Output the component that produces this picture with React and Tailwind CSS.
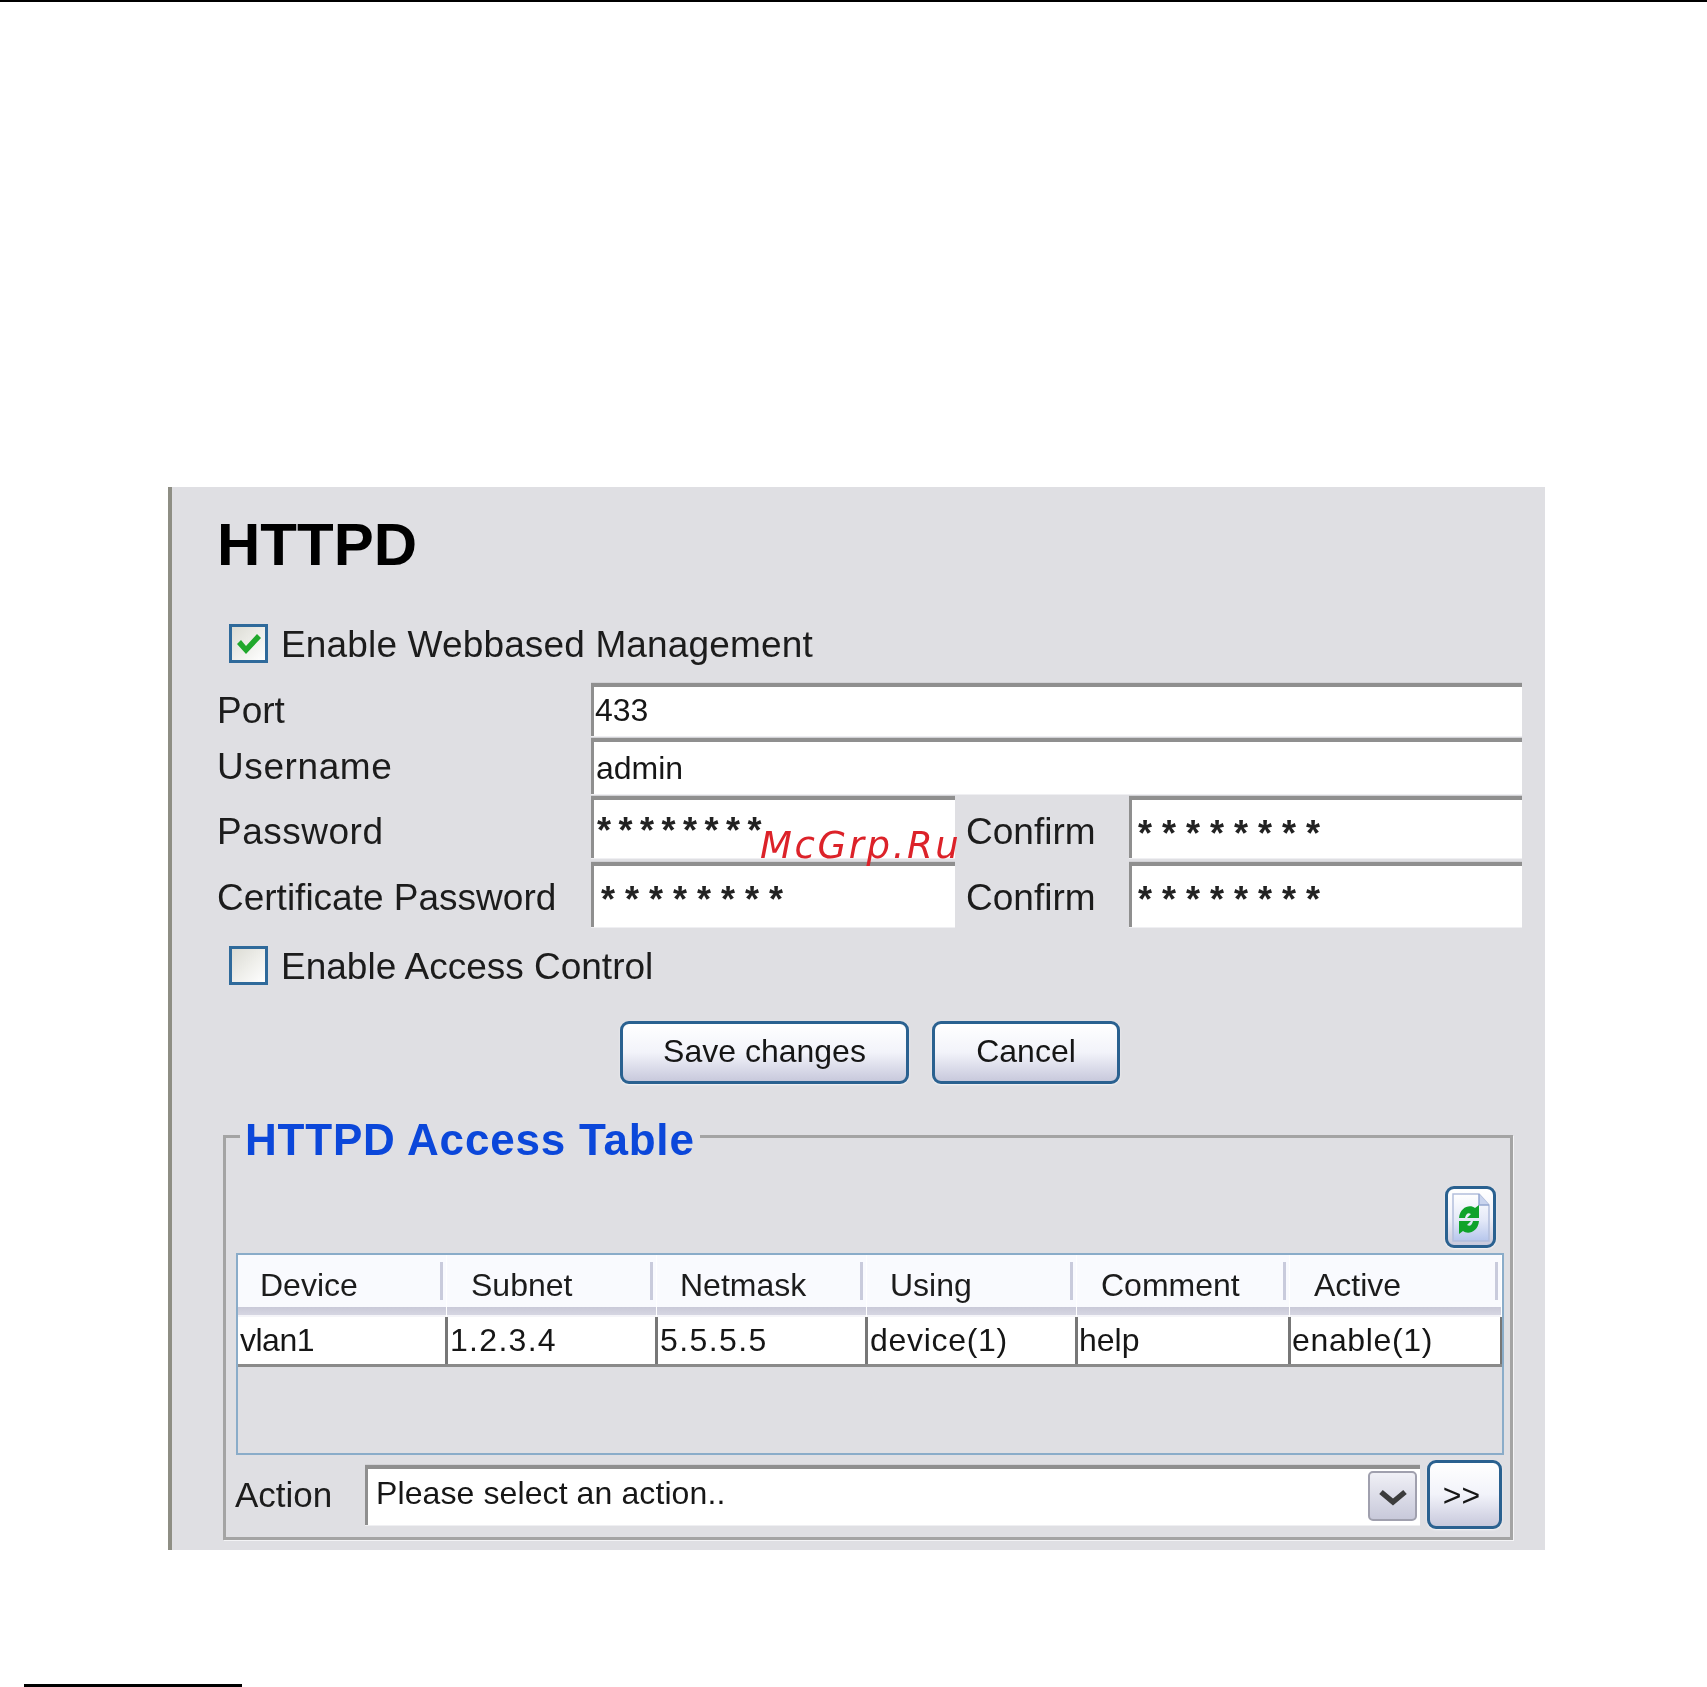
import React from "react";

const label = "text-[37px] leading-none text-[#1c1c1c]";
const data = "text-[32px] leading-none text-[#161616]";

function Field({ children, className = "" }) {
  return (
    <div className={"bg-white border-t-4 border-l-[3px] border-t-[#8f8f8f] border-l-[#8f8f8f] shadow-[0_-1px_0_#d2d2d6,0_1px_0_#efeff2] flex pl-[1px] " + className}>
      {children}
    </div>
  );
}

function Stars({ className }) {
  return <span className={"text-[36px] leading-none font-bold text-[#222222] " + className}>********</span>;
}

function Check({ checked }) {
  return (
    <div className="w-[39px] h-[39px] shrink-0 border-[3px] border-[#2f6a9b] bg-gradient-to-br from-[#dcdcd4] to-white flex items-center justify-center">
      {checked && (
        <svg width="27" height="27" viewBox="0 0 27 27">
          <path d="M2 14 L6 10 L11 16 L22 4 L26 8 L11 24 Z" fill="#20a82c" />
        </svg>
      )}
    </div>
  );
}

function Btn({ className, children }) {
  return (
    <div className={"border-[3px] border-[#2a6190] rounded-[9px] bg-gradient-to-b from-white via-[#f2f3fa] to-[#c8c9dc] shadow-[0_1px_2px_#f4f4f6] flex items-center justify-center text-[#161616] " + className}>
      {children}
    </div>
  );
}

const cols = [
  { h: "Device", v: "vlan1", w: "w-[209px]", vw: "w-[207px]", hp: "pl-[22px]", vc: "pl-[2px]", tr: "tracking-[-0.5px]", b: "" },
  { h: "Subnet", v: "1.2.3.4", w: "w-[210px]", vw: "w-[210px]", hp: "pl-[24px]", vc: "pl-[2px]", tr: "tracking-[1.3px]", b: "border-l-[3px]" },
  { h: "Netmask", v: "5.5.5.5", w: "w-[210px]", vw: "w-[210px]", hp: "pl-[23px]", vc: "pl-[2px]", tr: "tracking-[1.4px]", b: "border-l-[3px]" },
  { h: "Using", v: "device(1)", w: "w-[210px]", vw: "w-[210px]", hp: "pl-[23px]", vc: "pl-[2px]", tr: "tracking-[0.7px]", b: "border-l-[3px]" },
  { h: "Comment", v: "help", w: "w-[213px]", vw: "w-[213px]", hp: "pl-[24px]", vc: "pl-[1px]", tr: "", b: "border-l-[3px]" },
  { h: "Active", v: "enable(1)", w: "w-[212px]", vw: "w-[214px]", hp: "pl-[24px]", vc: "pl-[1px]", tr: "tracking-[0.65px]", b: "border-l-[3px] border-r-[2px]" },
];

export default function App() {
  return (
    <div className="w-[1707px] h-[1687px] bg-white flex flex-col overflow-hidden font-['Liberation_Sans',sans-serif]">
      <div className="h-[2px] bg-black shrink-0" />
      <div className="mt-[485px] ml-[168px] w-[1377px] h-[1063px] shrink-0 bg-[#dfdfe3] border-l-4 border-l-[#8e8e84] pl-[45px] pr-[23px] flex flex-col blur-[0.4px]">
        <div className="h-[115px] flex items-center text-[60px] font-bold leading-none text-black">HTTPD</div>

        <div className="mt-[22px] ml-[12px] flex items-center gap-[13px] h-[39px]">
          <Check checked />
          <span className={label + " pt-[2px] tracking-[0.15px]"}>Enable Webbased Management</span>
        </div>

        <div className="mt-[20px] h-[53px] flex">
          <div className={"w-[374px] flex items-center pt-[2px] " + label}>Port</div>
          <Field className="flex-1 items-center"><span className={data + " -mt-[4px]"}>433</span></Field>
        </div>
        <div className="mt-[2px] h-[56px] flex">
          <div className={"w-[374px] flex items-center tracking-[0.6px] " + label}>Username</div>
          <Field className="flex-1 items-center pl-[2px]"><span className={data}>admin</span></Field>
        </div>
        <div className="mt-[2px] h-[62px] flex">
          <div className={"w-[374px] flex items-center pt-[9px] tracking-[0.5px] " + label}>Password</div>
          <Field className="w-[364px] relative pl-[3px] pt-[13px]">
            <Stars className="tracking-[7.5px]" />
            <span className="absolute left-[166px] top-[27px] z-10 text-[37px] leading-none italic tracking-[2.6px] whitespace-nowrap text-[#dc2229] font-['DejaVu_Sans',sans-serif]">McGrp.Ru</span>
          </Field>
          <div className={"w-[174px] flex items-center pl-[11px] pt-[9px] " + label}>Confirm</div>
          <Field className="flex-1 pl-[6px] pt-[16px]"><Stars className="tracking-[10px]" /></Field>
        </div>
        <div className="mt-[4px] h-[65px] flex">
          <div className={"w-[374px] flex items-center pt-[6px] " + label}>Certificate Password</div>
          <Field className="w-[364px] pl-[7px] pt-[16px]"><Stars className="tracking-[10px]" /></Field>
          <div className={"w-[174px] flex items-center pl-[11px] pt-[6px] " + label}>Confirm</div>
          <Field className="flex-1 pl-[6px] pt-[16px]"><Stars className="tracking-[10px]" /></Field>
        </div>

        <div className="mt-[19px] ml-[12px] flex items-center gap-[13px] h-[39px]">
          <Check />
          <span className={label + " pt-[2px]"}>Enable Access Control</span>
        </div>

        <div className="mt-[36px] ml-[403px] flex gap-[23px]">
          <Btn className="w-[289px] h-[63px] text-[32px] pb-[4px]">Save changes</Btn>
          <Btn className="w-[188px] h-[63px] text-[32px] pb-[4px]">Cancel</Btn>
        </div>

        <fieldset className="mt-[27px] ml-[6px] w-[1290px] h-[429px] border-[3px] border-[#a4a4a4] shadow-[1px_1px_0_#f4f4f6]">
          <legend className="ml-[14px] px-[5px] h-[50px] text-[44px] leading-[58px] font-bold tracking-[0.8px] text-[#0b47da]">HTTPD Access Table</legend>

          <div className="mt-[25px] mr-[14px] flex justify-end">
            <Btn className="w-[51px] h-[62px]">
              <svg width="39" height="49" viewBox="0 0 39 49">
                <defs>
                  <linearGradient id="docfill" x1="0" y1="0" x2="0" y2="1">
                    <stop offset="0" stopColor="#ffffff" />
                    <stop offset="0.55" stopColor="#e4e9f8" />
                    <stop offset="1" stopColor="#b6c6ec" />
                  </linearGradient>
                </defs>
                <path d="M2 1 H28 L38 12 V48 H2 Z" fill="url(#docfill)" stroke="#b3bfdc" strokeWidth="1.5" />
                <path d="M28 1 V12 H38" fill="#c9d4ee" stroke="#94a6cf" strokeWidth="1.5" />
                <path d="M8 25 C9 14 19 11 24 15 L28 12 V25 H16 L20 21 C17 19 15 21 14 25 Z" fill="#0fa32b" />
                <path d="M28 28 C27 39 17 42 12 38 L8 41 V28 H20 L16 32 C19 34 21 32 22 28 Z" fill="#0fa32b" />
              </svg>
            </Btn>
          </div>

          <div className="mt-[5px] ml-[10px] w-[1268px] h-[202px] border-2 border-[#8aacc9]">
            <div className="flex">
              {cols.map((c) => (
                <div key={c.h} className={c.w + " h-[62px] flex flex-col border-r border-r-white"}>
                  <div className={"h-[52px] bg-[#f9fafe] flex items-center justify-between pr-[3px] " + c.hp}>
                    <span className="text-[32px] leading-none pt-[8px] text-[#1c1c1c]">{c.h}</span>
                    <span className="w-[3px] h-[38px] bg-[#c9cbdc]" />
                  </div>
                  <div className="h-[8px] bg-gradient-to-b from-[#c9c9d8] to-[#d6d6e2]" />
                  <div className="h-[2px] bg-[#f4f4f8]" />
                </div>
              ))}
            </div>
            <div className="flex h-[50px] w-[1264px] border-b-[3px] border-b-[#8a8a8a]">
              {cols.map((c) => (
                <div key={c.v} className={c.vw + " bg-white flex items-center border-[#777777] " + c.b + " " + c.vc}>
                  <span className={data + " -mt-[2px] " + c.tr}>{c.v}</span>
                </div>
              ))}
            </div>
          </div>

          <div className="mt-[5px] ml-[9px] flex items-start">
            <div className="w-[130px] h-[68px] flex items-center text-[35px] leading-none text-[#1c1c1c]">Action</div>
            <Field className="mt-[5px] w-[1055px] h-[60px] items-center pl-[8px] pr-[3px]">
              <span className={data + " flex-1 -mt-[8px] tracking-[0.1px]"}>Please select an action..</span>
              <div className="w-[49px] h-[50px] -mt-[2px] border-2 border-[#a0a0ae] rounded-[5px] bg-gradient-to-b from-[#f0f0f6] to-[#c8c9da] flex items-center justify-center">
                <svg width="30" height="20" viewBox="0 0 30 20">
                  <path d="M3 6 L15 16 L27 6" fill="none" stroke="#3c3c3c" strokeWidth="5.5" />
                </svg>
              </div>
            </Field>
            <Btn className="ml-[7px] w-[75px] h-[69px] pr-[6px]">
              <span className="text-[32px] font-normal leading-none">&gt;&gt;</span>
            </Btn>
          </div>
        </fieldset>
      </div>
      <div className="mt-[134px] ml-[24px] w-[218px] h-[3px] bg-black shrink-0" />
    </div>
  );
}
